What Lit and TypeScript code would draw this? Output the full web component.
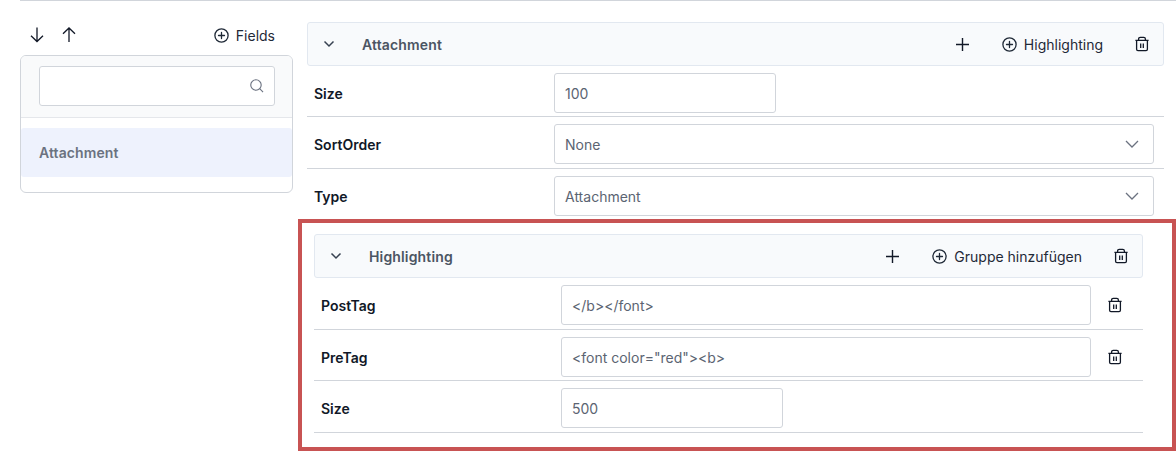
import { LitElement, html, css, svg } from "lit";
import { customElement } from "lit/decorators.js";

const plusCircle = html`<svg class="ic15" viewBox="0 0 15 15" fill="none" stroke="currentColor" stroke-width="1.3" stroke-linecap="round"><circle cx="7.5" cy="7.5" r="6.6"/><path d="M7.5 4.5v6M4.5 7.5h6"/></svg>`;
const plus = html`<svg class="ic13" viewBox="0 0 13 13" fill="none" stroke="currentColor" stroke-width="1.4"><path d="M6.5 0v13M0 6.5h13"/></svg>`;
const trash = html`<svg class="ic16" viewBox="0 0 16 16" fill="none" stroke="currentColor" stroke-width="1.3"><path d="M1.4 4.4h13.2M2.6 4.4v8.9c0 .9.5 1.4 1.4 1.4h8c.9 0 1.4-.5 1.4-1.4V4.4M4.6 4.4V3c0-1 .7-1.7 1.7-1.7h3.4c1 0 1.7.7 1.7 1.7v1.4M6.7 7.5v4.4M9.3 7.5v4.4"/></svg>`;
const chevBold = html`<svg class="chev-b" viewBox="0 0 12 8" fill="none" stroke="currentColor" stroke-width="1.5"><path d="M1.5 1.5 6 6l4.5-4.5"/></svg>`;
const chev = html`<svg class="chev" viewBox="0 0 14 8" fill="none" stroke="currentColor" stroke-width="1.3"><path d="M1 1l6 6 6-6"/></svg>`;
const search = svg`<circle cx="6.4" cy="6.4" r="5.6"/><path d="M10.4 10.4l3.6 3.6"/>`;

@customElement("app-root")
export class AppRoot extends LitElement {
  static styles = css`
    :host {
      display: block;
      width: 1176px;
      height: 458px;
      overflow: hidden;
      background: #fff;
      font-family: Inter, "Liberation Sans", sans-serif;
      font-size: 14px;
      color: #111827;
      box-sizing: border-box;
    }
    * { box-sizing: border-box; }
    .topline { height: 1px; margin-left: 20px; background: #d1d5db; }
    .page { display: flex; align-items: flex-start; padding: 21px 0 0 20px; }
    .left { width: 273px; flex: none; padding-top: 1px; }
    .right { width: 857px; margin-left: 14px; flex: none; }
    .ic16 { width: 16px; height: 16px; display: block; flex: none; }
    .ic15 { width: 15px; height: 15px; display: block; flex: none; }
    .ic13 { width: 13px; height: 13px; display: block; flex: none; }
    .chev-b { width: 12px; height: 8px; display: block; color: #374151; }
    .chev { width: 14px; height: 8px; display: block; color: #6b7280; }

    .tools { display: flex; align-items: center; height: 24px; margin-bottom: 8px; padding: 0 18px 0 9px; }
    .tools .arrow { width: 16px; height: 16px; margin-right: 16px; display: block; }
    .tools .btn { margin-left: auto; }
    .btn { display: flex; align-items: center; gap: 7px; color: #1f2937; font-size: 14px; white-space: nowrap; }

    .panel { border: 1px solid #d1d5db; border-radius: 6px; height: 138px; overflow: hidden; }
    .panel-head { height: 62px; background: #f9fafb; border-bottom: 1px solid #e5e7eb; padding: 10px 17px 0 18px; }
    .search { height: 40px; background: #fff; border: 1px solid #d1d5db; border-radius: 3px; display: flex; align-items: center; justify-content: flex-end; padding-right: 10px; }
    .search svg { width: 14px; height: 14px; color: #6b7280; }
    .item { margin-top: 10px; height: 49px; background: #eef2fd; border-radius: 3px; display: flex; align-items: center; padding-left: 18px; font-weight: 600; letter-spacing: 0.1px; color: #6b7280; }

    .head { height: 44px; background: #f8fafc; border: 1px solid #e2e8f0; border-radius: 3px; display: flex; align-items: center; padding-left: 15px; }
    .head .title { margin-left: 27px; font-weight: 600; letter-spacing: 0.15px; color: #4b5563; font-size: 14px; }
    .head .add { margin-left: auto; color: #111827; }
    .head .btn { margin-left: 33px; }
    .head .del { margin: 0 13px 0 31px; }

    .row { display: flex; align-items: center; height: 52px; padding-top: 3px; padding-left: 7px; border-bottom: 1px solid #d1d5db; }
    .row.first { height: 51px; padding-top: 4px; }
    .row.last { border-bottom: none; height: 50px; padding-top: 4px; }
    .label { width: 240px; flex: none; font-weight: 600; color: #111827; }
    .field { height: 40px; border: 1px solid #d1d5db; border-radius: 3px; display: flex; align-items: center; justify-content: space-between; padding: 0 14px 0 10px; color: #5b6472; font-size: 14px; background: #fff; }
    .field.sm { width: 222px; }
    .field.lg { width: 600px; }
    .field.md { width: 530px; }
    .row .del { margin-left: 16px; }

    .box { width: 878px; height: 232px; margin-left: -9px; border: 4px solid #c85353; padding: 11px 0 0 12px; }
    .box .inner { width: 829px; }
    .box .row.first { height: 52px; padding-top: 3px; }
    .box .row.mid { height: 51px; padding-top: 4px; }
  `;

  private arrow(d: string) {
    return html`<svg class="arrow" viewBox="0 0 16 16" fill="none" stroke="currentColor" stroke-width="1.3"><path d="${d}"/></svg>`;
  }

  render() {
    return html`
      <div class="topline"></div>
      <div class="page">
        <div class="left">
          <div class="tools">
            ${this.arrow("M8 .5v14M2 8.8l6 5.7 6-5.7")}
            ${this.arrow("M8 15V1M2 6.7 8 1l6 5.7")}
            <div class="btn">${plusCircle}<span>Fields</span></div>
          </div>
          <div class="panel">
            <div class="panel-head">
              <div class="search"><svg viewBox="0 0 15 15" fill="none" stroke="currentColor" stroke-width="1.2">${search}</svg></div>
            </div>
            <div class="item">Attachment</div>
          </div>
        </div>
        <div class="right">
          <div class="head">
            ${chevBold}<span class="title">Attachment</span>
            <span class="add">${plus}</span>
            <div class="btn">${plusCircle}<span>Highlighting</span></div>
            <span class="del">${trash}</span>
          </div>
          <div class="row first"><span class="label">Size</span><div class="field sm">100</div></div>
          <div class="row"><span class="label">SortOrder</span><div class="field lg">None ${chev}</div></div>
          <div class="row last"><span class="label">Type</span><div class="field lg">Attachment ${chev}</div></div>
          <div class="box">
            <div class="inner">
              <div class="head">
                ${chevBold}<span class="title">Highlighting</span>
                <span class="add">${plus}</span>
                <div class="btn">${plusCircle}<span>Gruppe hinzufügen</span></div>
                <span class="del">${trash}</span>
              </div>
              <div class="row first"><span class="label">PostTag</span><div class="field md">&lt;/b&gt;&lt;/font&gt;</div><span class="del">${trash}</span></div>
              <div class="row mid"><span class="label">PreTag</span><div class="field md">&lt;font color="red"&gt;&lt;b&gt;</div><span class="del">${trash}</span></div>
              <div class="row"><span class="label">Size</span><div class="field sm">500</div></div>
            </div>
          </div>
        </div>
      </div>
    `;
  }
}
